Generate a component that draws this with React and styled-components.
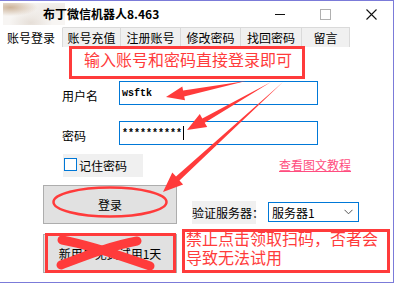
import styled, { createGlobalStyle } from "styled-components"

const RED = "#ff3b3b"
const BLUE = "#0078d7"
const FONT = `"Noto Sans CJK SC", "Noto Sans", sans-serif`

const GlobalStyle = createGlobalStyle`
  html, body { margin: 0; padding: 0; background: #fff; }
  body { font-family: ${FONT}; font-size: 12px; color: #000; }
`

// tapered annotation arrow, tail -> tip
function arrowPoints([tx, ty], [px, py], headLen, headHalf, shaftHalf) {
  const len = Math.hypot(px - tx, py - ty)
  const dx = (px - tx) / len
  const dy = (py - ty) / len
  const nx = -dy
  const ny = dx
  const bx = px - dx * headLen
  const by = py - dy * headLen
  const pts = [
    [tx, ty],
    [bx + nx * shaftHalf, by + ny * shaftHalf],
    [bx + nx * headHalf, by + ny * headHalf],
    [px, py],
    [bx - nx * headHalf, by - ny * headHalf],
    [bx - nx * shaftHalf, by - ny * shaftHalf],
  ]
  return pts.map((p) => p.map((v) => v.toFixed(1)).join(",")).join(" ")
}

const tabs = [
  { label: "账号登录", w: 63, active: true },
  { label: "账号充值", w: 58 },
  { label: "注册账号", w: 60 },
  { label: "修改密码", w: 60 },
  { label: "找回密码", w: 61 },
  { label: "留言", w: 48 },
]

export default function App() {
  return (
    <>
      <GlobalStyle />
      <Window>
        <TitleBar>
          <TitleArt />
          <Title>布丁微信机器人8.463</Title>
          <Controls>
            <CtrlButton>
              <MinLine />
            </CtrlButton>
            <CtrlButton>
              <MaxBox />
            </CtrlButton>
            <CtrlButton>
              <svg width="11" height="11" viewBox="0 0 11 11">
                <path d="M0.5 0.5 L10.5 10.5 M10.5 0.5 L0.5 10.5" stroke="#111" strokeWidth="1.1" />
              </svg>
            </CtrlButton>
          </Controls>
        </TitleBar>

        <TabStrip>
          {tabs.map((t) => (
            <Tab key={t.label} $w={t.w} $active={t.active}>
              {t.label}
            </Tab>
          ))}
        </TabStrip>

        <Page>
          <Notice>输入账号和密码直接登录即可</Notice>

          <FieldRow $top={2}>
            <FieldLabel>用户名</FieldLabel>
            <TextBox>wsftk</TextBox>
          </FieldRow>
          <FieldRow $top={16}>
            <FieldLabel>密码</FieldLabel>
            <TextBox>
              **********
              <Caret />
            </TextBox>
          </FieldRow>

          <CheckRow>
            <Remember>
              <CheckBox />
              记住密码
            </Remember>
            <HelpLink>查看图文教程</HelpLink>
          </CheckRow>

          <LoginRow>
            <GrayButton>登录</GrayButton>
            <ServerLabel>验证服务器：</ServerLabel>
            <Select>
              服务器1
              <svg width="9" height="6" viewBox="0 0 9 6">
                <path d="M0.5 0.8 L4.5 4.8 L8.5 0.8" fill="none" stroke="#555" strokeWidth="1" />
              </svg>
            </Select>
          </LoginRow>

          <BottomRow>
            <GrayButton>新用户免费试用1天</GrayButton>
            <NoteBox>
              <NoteText>禁止点击领取扫码，否者会导致无法试用</NoteText>
            </NoteBox>
          </BottomRow>
        </Page>

        <Marks width="396" height="285" viewBox="0 0 396 285">
          <polygon fill={RED} points={arrowPoints([246, 81], [166, 97], 18, 7, 3)} />
          <polygon fill={RED} points={arrowPoints([271, 82], [187, 130], 19, 7.5, 2.5)} />
          <polygon fill={RED} points={arrowPoints([283, 82], [163, 192], 20, 8, 2.6)} />
          <ellipse cx="110" cy="202" rx="56.5" ry="14.5" fill="none" stroke={RED} strokeWidth="2.5" />
          <rect x="46.5" y="234.5" width="128" height="37" fill="none" stroke={RED} strokeWidth="3" />
          <path
            d="M62 240 C 85 244, 110 252, 150 266"
            fill="none"
            stroke={RED}
            strokeWidth="9"
            strokeLinecap="round"
          />
          <path
            d="M61 265 C 85 256, 110 246, 137 241"
            fill="none"
            stroke={RED}
            strokeWidth="9"
            strokeLinecap="round"
          />
        </Marks>
      </Window>
    </>
  )
}

const Window = styled.div`
  position: relative;
  box-sizing: border-box;
  width: 394px;
  height: 283px;
  border-top: 1px solid #7b7bd9;
  border-right: 1px solid #7b7bd9;
  border-bottom: 1px solid #7b7bd9;
  background: #fff;
  display: flex;
  flex-direction: column;
  overflow: hidden;
`

const TitleBar = styled.div`
  position: relative;
  height: 26px;
  display: flex;
  align-items: center;
  padding-left: 43px;
`

const TitleArt = styled.div`
  position: absolute;
  left: 3px;
  top: 2px;
  width: 62px;
  height: 22px;
  background: radial-gradient(ellipse at 12% 20%, #cdb49a 0%, rgba(205, 180, 154, 0) 35%),
    radial-gradient(ellipse at 45% 90%, #e6dfd8 0%, rgba(230, 223, 216, 0) 45%),
    radial-gradient(ellipse at 85% 30%, #ece7e2 0%, rgba(236, 231, 226, 0) 50%), #f7f5f3;
`

const Title = styled.div`
  position: relative;
  font-weight: 700;
  font-size: 12px;
  line-height: 16px;
  margin-top: -1px;
`

const Controls = styled.div`
  margin-left: auto;
  display: flex;
  height: 100%;
`

const CtrlButton = styled.div`
  width: 46px;
  height: 100%;
  display: flex;
  align-items: center;
  justify-content: center;
  padding-left: 3px;
  box-sizing: border-box;
`

const MinLine = styled.div`
  width: 10px;
  height: 1px;
  background: #111;
`

const MaxBox = styled.div`
  width: 9px;
  height: 9px;
  border: 1px solid #b0b0b0;
`

const TabStrip = styled.div`
  display: flex;
  height: 20px;
`

const Tab = styled.div`
  box-sizing: border-box;
  width: ${(p) => p.$w}px;
  height: 100%;
  display: flex;
  align-items: center;
  justify-content: center;
  font-size: 12px;
  background: ${(p) => (p.$active ? "#fff" : "#f0f0f0")};
  border-top: 1px solid ${(p) => (p.$active ? "#fff" : "#dadada")};
  border-right: 1px solid #dadada;
`

const Page = styled.div`
  flex: 1;
  display: flex;
  flex-direction: column;
  margin-top: -1px;
`

const Notice = styled.div`
  box-sizing: border-box;
  margin-left: 69px;
  width: 236px;
  height: 33px;
  border: 3px solid ${RED};
  color: ${RED};
  font-size: 16px;
  line-height: 21px;
  padding-left: 12px;
  letter-spacing: 0;
`

const FieldRow = styled.div`
  display: flex;
  align-items: center;
  margin-left: 62px;
  margin-top: ${(p) => p.$top}px;
`

const FieldLabel = styled.div`
  width: 57px;
  font-size: 12px;
  padding-top: 4px;
`

const TextBox = styled.div`
  box-sizing: border-box;
  width: 199px;
  height: 24px;
  border: 1px solid ${BLUE};
  display: flex;
  align-items: center;
  padding-left: 2px;
  font-family: "Liberation Mono", "DejaVu Sans Mono", monospace;
  font-weight: 700;
  font-size: 10px;
`

const Caret = styled.span`
  display: inline-block;
  width: 1px;
  height: 14px;
  background: #000;
  margin-left: 1px;
`

const CheckRow = styled.div`
  display: flex;
  margin-top: 9px;
  margin-left: 63px;
  height: 23px;
`

const Remember = styled.div`
  width: 80px;
  height: 23px;
  background: #f0f0f0;
  display: flex;
  align-items: center;
  gap: 2px;
  font-size: 12px;
`

const CheckBox = styled.div`
  box-sizing: border-box;
  width: 13px;
  height: 13px;
  margin-left: 1px;
  margin-top: -2px;
  border: 1px solid ${BLUE};
  background: #fff;
`

const HelpLink = styled.a`
  margin-left: 136px;
  margin-top: 2px;
  color: #ff4d80;
  text-decoration: underline;
  font-size: 12px;
  line-height: 18px;
  align-self: flex-start;
`

const LoginRow = styled.div`
  display: flex;
  align-items: flex-end;
  margin-top: 8px;
  height: 39px;
`

const GrayButton = styled.div`
  box-sizing: border-box;
  margin-left: 43px;
  width: 134px;
  height: 39px;
  background: #e1e1e1;
  border: 1px solid #adadad;
  display: flex;
  align-items: center;
  justify-content: center;
  font-size: 12px;
`

const ServerLabel = styled.div`
  margin-left: 15px;
  width: 64px;
  height: 23px;
  line-height: 23px;
  background: #f0f0f0;
  font-size: 12px;
  white-space: nowrap;
`

const Select = styled.div`
  box-sizing: border-box;
  margin-left: 12px;
  margin-bottom: 2px;
  width: 91px;
  height: 20px;
  border: 1px solid ${BLUE};
  display: flex;
  align-items: center;
  justify-content: space-between;
  padding: 0 5px 0 3px;
  font-size: 12px;
`

const BottomRow = styled.div`
  display: flex;
  align-items: flex-end;
  margin-top: 5px;
  height: 44px;
`

const NoteBox = styled.div`
  box-sizing: border-box;
  margin-left: 5px;
  width: 208px;
  height: 44px;
  border: 3px solid ${RED};
  color: ${RED};
  font-size: 16px;
  line-height: 19px;
  padding-left: 1px;
  overflow: visible;
`

const NoteText = styled.div`
  margin-top: -3px;
`

const Marks = styled.svg`
  position: absolute;
  left: 0;
  top: -1px;
  pointer-events: none;
`
